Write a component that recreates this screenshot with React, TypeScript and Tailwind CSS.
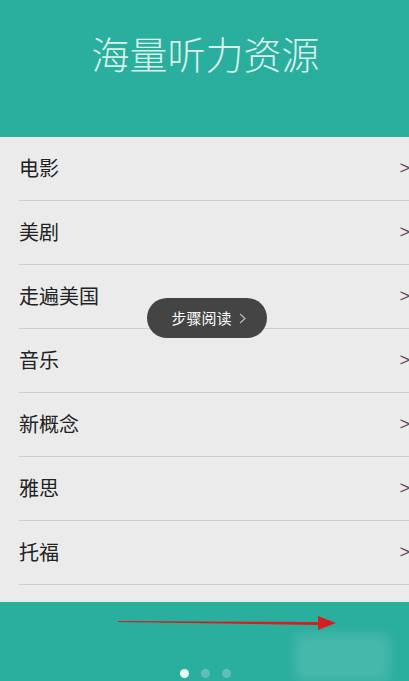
import React from "react";

const items = ["电影", "美剧", "走遍美国", "音乐", "新概念", "雅思", "托福"];

export default function App() {
  return (
    <div
      className="relative w-[409px] h-[681px] overflow-hidden bg-[#2aae9e]"
      style={{ fontFamily: '"Noto Sans CJK SC", "Noto Sans", sans-serif' }}
    >
      <div className="h-[137px] flex justify-center pt-[28px]">
        <div className="text-[38px] leading-[50px] font-light text-[#d9f1ec] pl-[2px]">海量听力资源</div>
      </div>
      <div className="bg-[#ebebeb] h-[465px] pl-[19px]">
        {items.map((t) => (
          <div key={t} className="h-[64px] border-b border-[#cfcfcf] flex items-center justify-between">
            <span className="text-[20px] text-[#222] -mt-[2px]">{t}</span>
            <span className="text-[18px] text-[#555] mr-[-1px]" style={{ fontFamily: '"Liberation Sans", sans-serif' }}>&gt;</span>
          </div>
        ))}
      </div>
      <div className="relative h-[79px]">
        <svg className="absolute left-[115px] top-[9px]" width="225" height="24" viewBox="0 0 225 24">
          <polygon points="3,10 203,11 203,5 221,12 203,19 203,14 3,11" fill="#d21f1f" />
        </svg>
        <div className="absolute left-[295px] top-[32px] w-[95px] h-[47px] bg-[#ffffff22] rounded-[6px] blur-[6px]" />
        <div className="absolute left-0 right-0 bottom-[3px] flex justify-center gap-[12px] pl-[1px]">
          <span className="w-[9px] h-[9px] rounded-full bg-[#eef8f6]" />
          <span className="w-[9px] h-[9px] rounded-full bg-[#5cc1b4]" />
          <span className="w-[9px] h-[9px] rounded-full bg-[#5cc1b4]" />
        </div>
      </div>
      <div className="absolute left-[147px] top-[298px] w-[120px] h-[40px] rounded-full bg-[#444444] flex items-center justify-center gap-[7px] pl-[3px]">
        <span className="text-[15px] text-white">步骤阅读</span>
        <svg width="7" height="11" viewBox="0 0 7 11"><path d="M1 1 L6 5.5 L1 10" stroke="#bbb" strokeWidth="1.2" fill="none" /></svg>
      </div>
    </div>
  );
}
